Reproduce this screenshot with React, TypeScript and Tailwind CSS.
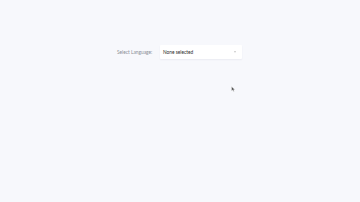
export default function App() {
  return (
    <div
      className="relative h-[202px] w-[360px] overflow-hidden bg-[#f7f8fc]"
      style={{ fontFamily: "Lato, 'Liberation Sans', sans-serif" }}
    >
      <div className="flex items-center pt-[45px] pl-[117px]">
        <div className="w-[43px] text-[4.8px] leading-[14px] text-[#8a8d95]">
          Select Language:
        </div>
        <div className="flex h-[14px] w-[82px] items-center justify-between rounded-[1px] bg-white pl-[3px] pr-[6px] shadow-[0_1px_2px_rgba(40,40,80,0.06)]">
          <span className="text-[4.8px] leading-[6px] text-[#2a2a2a]">
            None selected
          </span>
          <svg width="2" height="2" viewBox="0 0 6 4">
            <path d="M0 0 L6 0 L3 4 Z" fill="#b5b5b5" />
          </svg>
        </div>
      </div>

      <svg
        className="absolute left-[231px] top-[86px]"
        width="4"
        height="6"
        viewBox="0 0 8 12"
      >
        <path
          d="M1 1 L1 10 L3.5 8 L5 11 L6.5 10.4 L5 7.5 L8 7.5 Z"
          fill="#555"
          stroke="#fff"
          strokeWidth="0.8"
        />
      </svg>
    </div>
  );
}
